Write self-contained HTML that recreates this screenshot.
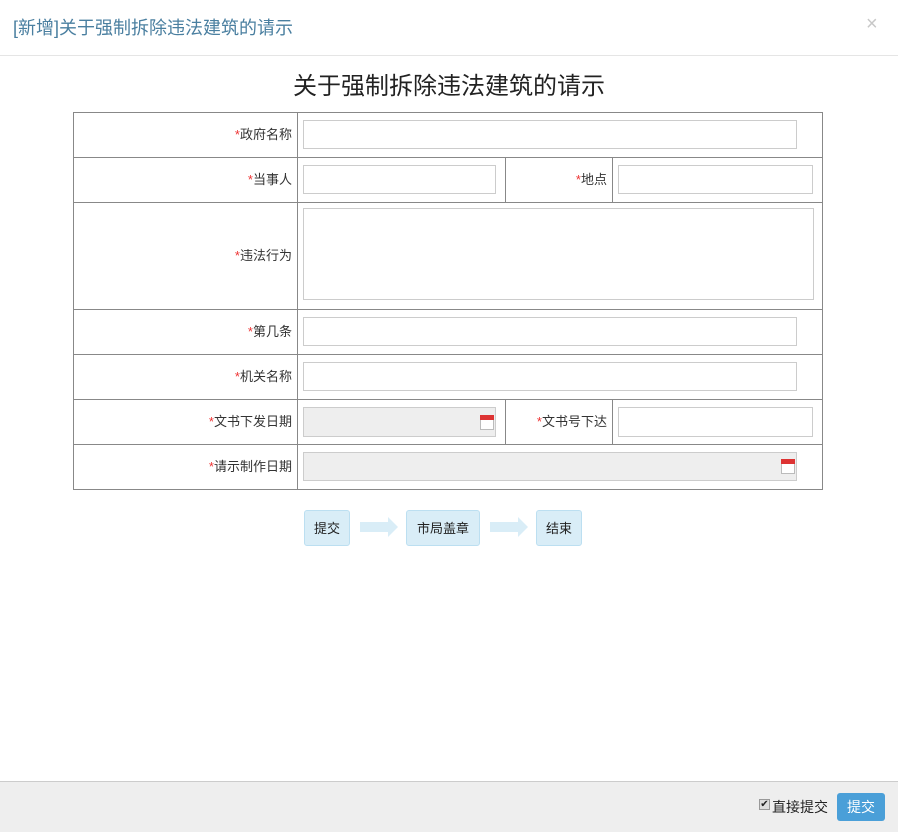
<!DOCTYPE html>
<html><head><meta charset="utf-8"><style>
body{margin:0;width:898px;height:831px;background:#fff;position:relative;overflow:hidden;font-family:"Liberation Sans","Noto Sans CJK SC",sans-serif;}
.a{position:absolute;}
.h{left:0;top:0;width:898px;height:55px;border-bottom:1px solid #e5e5e5;}
.ht{left:13px;top:14px;font-size:18px;color:#4a7fa0;}
.x{left:866px;top:13px;font-size:20px;color:#c8c8c8;}
.t{left:0;width:898px;top:66px;text-align:center;font-size:24px;color:#222;}
.hl{background:#888;height:1px;left:73px;width:750px;}
.vl{background:#888;width:1px;}
.lb{font-size:13px;color:#333;text-align:right;}
.lb i{color:#e33;font-style:normal;}
.in{border:1px solid #ccc;box-sizing:border-box;background:#fff;}
.g{background:#eee;}
.f{background:#d9edf7;border:1px solid #bcdff1;border-radius:3px;box-sizing:border-box;font-size:13px;color:#222;text-align:center;line-height:35px;height:36px;top:510px;}
.ar{top:522px;height:10px;background:#d9edf7;}
.cal{width:14px;height:15px;border:1px solid #bbb;background:#fff;box-sizing:border-box;}
.cal:before{content:"";position:absolute;left:-1px;top:-1px;width:14px;height:5px;background:#d33;}
.ft{left:0;top:781px;width:898px;height:50px;background:#eee;border-top:1px solid #ccc;}
</style></head><body>
<div class="a h"></div>
<div class="a ht">[新增]关于强制拆除违法建筑的请示</div>
<div class="a x">×</div>
<div class="a t">关于强制拆除违法建筑的请示</div>

<div class="a hl" style="top:112px"></div>
<div class="a hl" style="top:157px"></div>
<div class="a hl" style="top:202px"></div>
<div class="a hl" style="top:309px"></div>
<div class="a hl" style="top:354px"></div>
<div class="a hl" style="top:399px"></div>
<div class="a hl" style="top:444px"></div>
<div class="a hl" style="top:489px"></div>
<div class="a vl" style="left:73px;top:112px;height:378px"></div>
<div class="a vl" style="left:822px;top:112px;height:378px"></div>
<div class="a vl" style="left:297px;top:112px;height:378px"></div>
<div class="a vl" style="left:505px;top:157px;height:45px"></div>
<div class="a vl" style="left:612px;top:157px;height:45px"></div>
<div class="a vl" style="left:505px;top:399px;height:45px"></div>
<div class="a vl" style="left:612px;top:399px;height:45px"></div>

<div class="a lb" style="left:80px;width:212px;top:124px"><i>*</i>政府名称</div>
<div class="a lb" style="left:80px;width:212px;top:169px"><i>*</i>当事人</div>
<div class="a lb" style="left:510px;width:97px;top:169px"><i>*</i>地点</div>
<div class="a lb" style="left:80px;width:212px;top:245px"><i>*</i>违法行为</div>
<div class="a lb" style="left:80px;width:212px;top:321px"><i>*</i>第几条</div>
<div class="a lb" style="left:80px;width:212px;top:366px"><i>*</i>机关名称</div>
<div class="a lb" style="left:80px;width:212px;top:411px"><i>*</i>文书下发日期</div>
<div class="a lb" style="left:510px;width:97px;top:411px"><i>*</i>文书号下达</div>
<div class="a lb" style="left:80px;width:212px;top:456px"><i>*</i>请示制作日期</div>

<div class="a in" style="left:303px;top:120px;width:494px;height:29px"></div>
<div class="a in" style="left:303px;top:165px;width:193px;height:29px"></div>
<div class="a in" style="left:618px;top:165px;width:195px;height:29px"></div>
<div class="a in" style="left:303px;top:208px;width:511px;height:92px"></div>
<div class="a in" style="left:303px;top:317px;width:494px;height:29px"></div>
<div class="a in" style="left:303px;top:362px;width:494px;height:29px"></div>
<div class="a in g" style="left:303px;top:407px;width:193px;height:30px"></div>
<div class="a cal" style="left:480px;top:415px"></div>
<div class="a in" style="left:618px;top:407px;width:195px;height:30px"></div>
<div class="a in g" style="left:303px;top:452px;width:494px;height:29px"></div>
<div class="a cal" style="left:781px;top:459px"></div>

<div class="a f" style="left:304px;width:46px">提交</div>
<div class="a ar" style="left:360px;width:30px"></div>
<div class="a" style="left:388px;top:517px;width:0;height:0;border-left:10px solid #d9edf7;border-top:10px solid transparent;border-bottom:10px solid transparent"></div>
<div class="a f" style="left:406px;width:74px">市局盖章</div>
<div class="a ar" style="left:490px;width:30px"></div>
<div class="a" style="left:518px;top:517px;width:0;height:0;border-left:10px solid #d9edf7;border-top:10px solid transparent;border-bottom:10px solid transparent"></div>
<div class="a f" style="left:536px;width:46px">结束</div>

<div class="a ft"></div>
<div class="a" style="left:759px;top:799px;width:11px;height:11px;border:1px solid #999;background:#ddd;box-sizing:border-box;font-size:10px;line-height:9px;text-align:center;color:#222">✔</div>
<div class="a" style="left:772px;top:797px;font-size:14px;color:#222">直接提交</div>
<div class="a" style="left:837px;top:793px;width:48px;height:28px;background:#4a9fd8;border-radius:3px;color:#fff;font-size:14px;text-align:center;line-height:28px">提交</div>
</body></html>
